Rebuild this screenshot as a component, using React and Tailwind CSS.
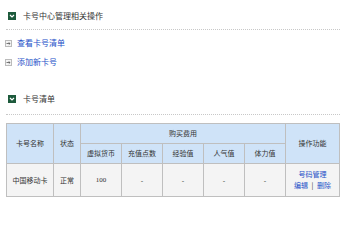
import React from 'react';

const font = "font-['Noto_Sans_CJK_SC','Noto_Sans',sans-serif]";

const SectionHead = ({ title }) => (
  <div className="flex items-center gap-[7px] pl-[8px] h-[15px]">
    <span className="w-[8px] h-[8px] bg-[#1d5a3c] flex items-center justify-center">
      <svg width="6" height="6" viewBox="0 0 6 6">
        <path d="M1 2 L3 4 L5 2" stroke="#fff" strokeWidth="1.2" fill="none" />
      </svg>
    </span>
    <span className="text-[8px] text-[#333] leading-none">{title}</span>
  </div>
);

const LinkRow = ({ label }) => (
  <div className="flex items-center gap-[5px] pl-[5px] h-[10px]">
    <span className="w-[7px] h-[7px] border border-[#bbb] bg-[#f4f4f4] flex items-center justify-center">
      <svg width="5" height="5" viewBox="0 0 5 5">
        <path d="M0.5 2.5 H4 M2.8 1.3 L4 2.5 L2.8 3.7" stroke="#555" strokeWidth="0.8" fill="none" />
      </svg>
    </span>
    <a className="text-[8px] text-[#2350c8] leading-none">{label}</a>
  </div>
);

const Dots = () => (
  <div className="mx-[6px] w-[334px] border-t border-dotted border-[#c8c8c8]" />
);

const th = 'border border-[#bfbfbf] font-normal text-[7px] text-[#333] leading-none';
const td = 'border border-[#bfbfbf] text-[7px] text-[#333] leading-none text-center';

export default function App() {
  return (
    <div className={`w-[350px] h-[250px] bg-white ${font} overflow-hidden`}>
      <div className="pt-[8px]">
        <SectionHead title="卡号中心管理相关操作" />
      </div>
      <div className="mt-[6px]">
        <Dots />
      </div>
      <div className="mt-[8px] flex flex-col gap-[9px]">
        <LinkRow label="查看卡号清单" />
        <LinkRow label="添加新卡号" />
      </div>
      <div className="mt-[24px]">
        <SectionHead title="卡号清单" />
      </div>
      <div className="mt-[8px]">
        <Dots />
      </div>
      <table className="mt-[8px] ml-[6px] w-[333px] border-collapse table-fixed">
        <colgroup>
          <col className="w-[47px]" />
          <col className="w-[27px]" />
          <col className="w-[41px]" />
          <col className="w-[41px]" />
          <col className="w-[41px]" />
          <col className="w-[41px]" />
          <col className="w-[41px]" />
          <col className="w-[54px]" />
        </colgroup>
        <thead className="bg-[#cfe3f8]">
          <tr className="h-[20px]">
            <th rowSpan={2} className={th}>卡号名称</th>
            <th rowSpan={2} className={th}>状态</th>
            <th colSpan={5} className={th}>购买费用</th>
            <th rowSpan={2} className={th}>操作功能</th>
          </tr>
          <tr className="h-[20px]">
            <th className={th}>虚拟货币</th>
            <th className={th}>充值点数</th>
            <th className={th}>经验值</th>
            <th className={th}>人气值</th>
            <th className={th}>体力值</th>
          </tr>
        </thead>
        <tbody className="bg-[#f4f4f4]">
          <tr className="h-[33px]">
            <td className={td}>中国移动卡</td>
            <td className={td}>正常</td>
            <td className={`${td} font-['Liberation_Serif',serif]`}>100</td>
            <td className={td}>-</td>
            <td className={td}>-</td>
            <td className={td}>-</td>
            <td className={td}>-</td>
            <td className={td}>
              <div className="flex flex-col items-center gap-[4px] text-[#2350c8]">
                <span>号码管理</span>
                <span>
                  编辑 <span className="text-[#333] mx-[2px]">|</span> 删除
                </span>
              </div>
            </td>
          </tr>
        </tbody>
      </table>
    </div>
  );
}
